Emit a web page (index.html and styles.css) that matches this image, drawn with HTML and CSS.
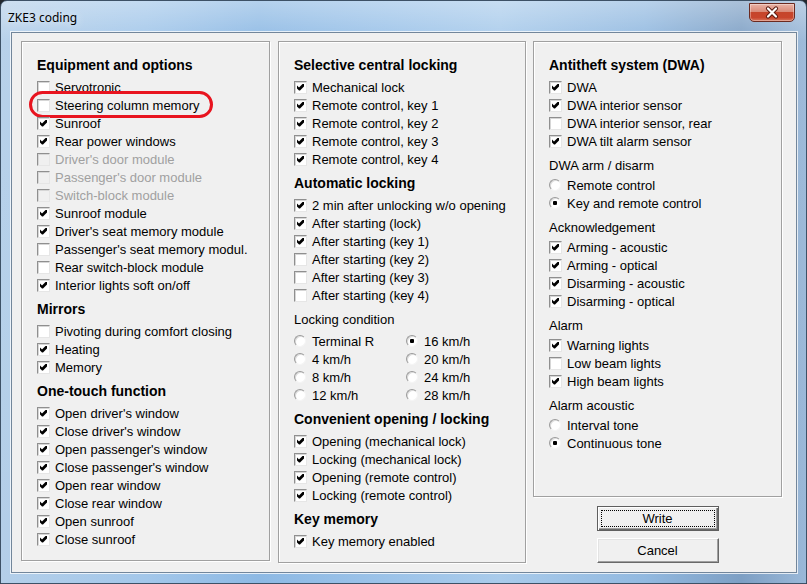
FILE: index.html
```html
<!DOCTYPE html>
<html>
<head>
<meta charset="utf-8">
<title>ZKE3 coding</title>
<link rel="stylesheet" href="styles.css">
</head>
<body>
<div class="window">
  <div class="titlebar">
    <span class="title">ZKE3 coding</span>
    <span class="close">
      <svg width="46" height="19" viewBox="0 0 46 19">
        <path d="M19 5.5 L27 13.5 M27 5.5 L19 13.5" stroke="#5a1a10" stroke-width="4.2" stroke-linecap="round"/>
        <path d="M19 5.5 L27 13.5 M27 5.5 L19 13.5" stroke="#ffffff" stroke-width="2.2" stroke-linecap="round"/>
      </svg>
    </span>
  </div>
  <div class="client">
    <div class="group g-left">
      <div class="head">Equipment and options</div>
      <div class="row"><span class="cb"></span><span class="lbl">Servotronic</span></div>
      <div class="row"><span class="cb"></span><span class="lbl">Steering column memory</span><span class="mark"></span></div>
      <div class="row"><span class="cb on"></span><span class="lbl">Sunroof</span></div>
      <div class="row"><span class="cb on"></span><span class="lbl">Rear power windows</span></div>
      <div class="row dis"><span class="cb"></span><span class="lbl">Driver's door module</span></div>
      <div class="row dis"><span class="cb"></span><span class="lbl">Passenger's door module</span></div>
      <div class="row dis"><span class="cb"></span><span class="lbl">Switch-block module</span></div>
      <div class="row"><span class="cb on"></span><span class="lbl">Sunroof module</span></div>
      <div class="row"><span class="cb on"></span><span class="lbl">Driver's seat memory module</span></div>
      <div class="row"><span class="cb"></span><span class="lbl">Passenger's seat memory modul.</span></div>
      <div class="row"><span class="cb"></span><span class="lbl">Rear switch-block module</span></div>
      <div class="row"><span class="cb on"></span><span class="lbl">Interior lights soft on/off</span></div>
      <div class="head">Mirrors</div>
      <div class="row"><span class="cb"></span><span class="lbl">Pivoting during comfort closing</span></div>
      <div class="row"><span class="cb on"></span><span class="lbl">Heating</span></div>
      <div class="row"><span class="cb on"></span><span class="lbl">Memory</span></div>
      <div class="head">One-touch function</div>
      <div class="row"><span class="cb on"></span><span class="lbl">Open driver's window</span></div>
      <div class="row"><span class="cb on"></span><span class="lbl">Close driver's window</span></div>
      <div class="row"><span class="cb on"></span><span class="lbl">Open passenger's window</span></div>
      <div class="row"><span class="cb on"></span><span class="lbl">Close passenger's window</span></div>
      <div class="row"><span class="cb on"></span><span class="lbl">Open rear window</span></div>
      <div class="row"><span class="cb on"></span><span class="lbl">Close rear window</span></div>
      <div class="row"><span class="cb on"></span><span class="lbl">Open sunroof</span></div>
      <div class="row"><span class="cb on"></span><span class="lbl">Close sunroof</span></div>
    </div>

    <div class="group g-mid">
      <div class="head">Selective central locking</div>
      <div class="row"><span class="cb on"></span><span class="lbl">Mechanical lock</span></div>
      <div class="row"><span class="cb on"></span><span class="lbl">Remote control, key 1</span></div>
      <div class="row"><span class="cb on"></span><span class="lbl">Remote control, key 2</span></div>
      <div class="row"><span class="cb on"></span><span class="lbl">Remote control, key 3</span></div>
      <div class="row"><span class="cb on"></span><span class="lbl">Remote control, key 4</span></div>
      <div class="head">Automatic locking</div>
      <div class="row"><span class="cb on"></span><span class="lbl">2 min after unlocking w/o opening</span></div>
      <div class="row"><span class="cb on"></span><span class="lbl">After starting (lock)</span></div>
      <div class="row"><span class="cb on"></span><span class="lbl">After starting (key 1)</span></div>
      <div class="row"><span class="cb"></span><span class="lbl">After starting (key 2)</span></div>
      <div class="row"><span class="cb"></span><span class="lbl">After starting (key 3)</span></div>
      <div class="row"><span class="cb"></span><span class="lbl">After starting (key 4)</span></div>
      <div class="sub">Locking condition</div>
      <div class="radios">
        <div class="row"><span class="rb"></span><span class="lbl">Terminal R</span></div>
        <div class="row"><span class="rb on"></span><span class="lbl">16 km/h</span></div>
        <div class="row"><span class="rb"></span><span class="lbl">4 km/h</span></div>
        <div class="row"><span class="rb"></span><span class="lbl">20 km/h</span></div>
        <div class="row"><span class="rb"></span><span class="lbl">8 km/h</span></div>
        <div class="row"><span class="rb"></span><span class="lbl">24 km/h</span></div>
        <div class="row"><span class="rb"></span><span class="lbl">12 km/h</span></div>
        <div class="row"><span class="rb"></span><span class="lbl">28 km/h</span></div>
      </div>
      <div class="head">Convenient opening / locking</div>
      <div class="row"><span class="cb on"></span><span class="lbl">Opening (mechanical lock)</span></div>
      <div class="row"><span class="cb on"></span><span class="lbl">Locking (mechanical lock)</span></div>
      <div class="row"><span class="cb on"></span><span class="lbl">Opening (remote control)</span></div>
      <div class="row"><span class="cb on"></span><span class="lbl">Locking (remote control)</span></div>
      <div class="head">Key memory</div>
      <div class="row"><span class="cb on"></span><span class="lbl">Key memory enabled</span></div>
    </div>

    <div class="side">
      <div class="group g-right">
        <div class="head">Antitheft system (DWA)</div>
        <div class="row"><span class="cb on"></span><span class="lbl">DWA</span></div>
        <div class="row"><span class="cb on"></span><span class="lbl">DWA interior sensor</span></div>
        <div class="row"><span class="cb"></span><span class="lbl">DWA interior sensor, rear</span></div>
        <div class="row"><span class="cb on"></span><span class="lbl">DWA tilt alarm sensor</span></div>
        <div class="sub tight">DWA arm / disarm</div>
        <div class="row"><span class="rb"></span><span class="lbl">Remote control</span></div>
        <div class="row"><span class="rb on"></span><span class="lbl">Key and remote control</span></div>
        <div class="sub tight">Acknowledgement</div>
        <div class="row"><span class="cb on"></span><span class="lbl">Arming - acoustic</span></div>
        <div class="row"><span class="cb on"></span><span class="lbl">Arming - optical</span></div>
        <div class="row"><span class="cb on"></span><span class="lbl">Disarming - acoustic</span></div>
        <div class="row"><span class="cb on"></span><span class="lbl">Disarming - optical</span></div>
        <div class="sub tight">Alarm</div>
        <div class="row"><span class="cb on"></span><span class="lbl">Warning lights</span></div>
        <div class="row"><span class="cb"></span><span class="lbl">Low beam lights</span></div>
        <div class="row"><span class="cb on"></span><span class="lbl">High beam lights</span></div>
        <div class="sub tight">Alarm acoustic</div>
        <div class="row"><span class="rb"></span><span class="lbl">Interval tone</span></div>
        <div class="row"><span class="rb on"></span><span class="lbl">Continuous tone</span></div>
      </div>
      <button class="btn default"><span class="focus">Write</span></button>
      <button class="btn cancel">Cancel</button>
    </div>
  </div>
</div>
</body>
</html>
```

FILE: styles.css
```css
html, body {
  margin: 0;
  padding: 0;
}
body {
  width: 807px;
  height: 584px;
  overflow: hidden;
  background: #23282e;
  font-family: "Liberation Sans", Arial, sans-serif;
}
.window {
  box-sizing: border-box;
  width: 807px;
  height: 584px;
  border: 1px solid #3d5166;
  border-radius: 7px 7px 0 0;
  background:
    linear-gradient(180deg, rgba(255,255,255,0.35) 0, rgba(255,255,255,0.05) 40px, rgba(255,255,255,0) 100%),
    linear-gradient(90deg, #b4cfe9 0%, #a3c7ea 18%, #8db9e4 32%, #9cc3e9 48%, #a9cbeb 62%, #92b9e0 80%, #7d9fc4 92%, #9ab8d8 100%);
  display: flex;
  flex-direction: column;
  padding: 0 9px 10px 10px;
}
.titlebar {
  height: 31px;
  flex: none;
  margin: 0 -9px 0 -10px;
  padding: 0 11px 0 7px;
  display: flex;
  align-items: flex-start;
}
.title {
  margin-top: 9px;
  font-family: "Noto Sans", "Open Sans", sans-serif;
  font-size: 12px;
  line-height: 16px;
  color: #000;
  text-shadow: 0 0 8px rgba(255,255,255,0.9);
}
.close {
  margin-left: auto;
  margin-top: 2px;
  width: 46px;
  height: 19px;
  box-sizing: border-box;
  border: 1px solid #6b2a20;
  border-radius: 0 0 5px 5px;
  background: linear-gradient(180deg, #eab3a6 0%, #d98a78 45%, #c5452b 50%, #c8452c 80%, #d8785f 100%);
  box-shadow: inset 0 0 0 1px rgba(255,255,255,0.35);
  position: relative;
}
.close svg {
  position: absolute;
  left: -1px;
  top: -1px;
}
.client {
  flex: 1;
  box-sizing: border-box;
  border: 1px solid #72869b;
  box-shadow: 0 0 0 1px rgba(255,255,255,0.75);
  background: #f0f0f0;
  padding: 8px 0 0 9px;
  display: flex;
  align-items: flex-start;
  font-size: 13px;
  color: #000;
}
.group {
  box-sizing: border-box;
  border: 1px solid #a0a0a0;
  box-shadow: inset 1px 1px 0 #ffffff, 1px 1px 0 #ffffff;
  padding: 8px 0 0 15px;
}
.g-left { width: 249px; height: 520px; margin-right: 8px; }
.g-mid { width: 248px; height: 522px; margin-right: 7px; }
.g-right { width: 249px; height: 456px; }
.side {
  display: flex;
  flex-direction: column;
  align-items: center;
  width: 249px;
}
.head {
  font-weight: bold;
  font-size: 14px;
  line-height: 18px;
  height: 18px;
  margin: 6px 0 4px;
  white-space: nowrap;
}
.sub {
  font-size: 13px;
  line-height: 18px;
  height: 18px;
  margin: 6px 0 4px;
  padding-top: 1px;
  box-sizing: border-box;
}
.sub.tight { margin-bottom: 2px; }
.row {
  height: 18px;
  display: flex;
  align-items: center;
  white-space: nowrap;
  position: relative;
}
.lbl {
  line-height: 18px;
  padding-top: 2px;
}
.cb {
  position: relative;
  flex: none;
  box-sizing: border-box;
  width: 13px;
  height: 13px;
  margin-right: 5px;
  background: #ffffff;
  border: 1px solid;
  border-color: #8f8f8f #e6e6e6 #e6e6e6 #8f8f8f;
  box-shadow: inset 1px 1px 0 #d6d6d6;
}
.cb.on::after {
  content: "";
  position: absolute;
  left: 2px;
  top: 2px;
  width: 7px;
  height: 7px;
  background: #000;
  clip-path: polygon(0 2px, 2px 4px, 6px 0, 7px 0, 7px 3px, 3px 7px, 2px 7px, 0 5px);
}
.dis { color: #a0a0a0; }
.dis .cb { background: #f0f0f0; }
.rb {
  position: relative;
  flex: none;
  box-sizing: border-box;
  width: 12px;
  height: 12px;
  margin-right: 6px;
  border-radius: 50%;
  border: 1px solid;
  border-color: #9a9a9a #f4f4f4 #f4f4f4 #9a9a9a;
  background: #ffffff;
  box-shadow: inset 1px 1px 0 #dcdcdc;
}
.rb.on::after {
  content: "";
  position: absolute;
  left: 3px;
  top: 3px;
  width: 4px;
  height: 4px;
  border-radius: 1px;
  background: #000;
}
.radios {
  display: grid;
  grid-template-columns: 112px auto;
}
.mark {
  position: absolute;
  left: -8px;
  top: -5px;
  width: 184px;
  height: 27px;
  box-sizing: border-box;
  border: 3px solid #e8141f;
  border-radius: 14px;
}
.btn {
  box-sizing: border-box;
  width: 122px;
  height: 25px;
  padding: 0;
  font-family: "Liberation Sans", Arial, sans-serif;
  font-size: 13px;
  color: #000;
  background: #f0f0f0;
  border: 1px solid;
  display: flex;
  align-items: center;
  justify-content: center;
}
.default {
  margin-top: 9px;
  border-color: #5f5f5f;
  box-shadow: inset 1px 1px 0 #ffffff, inset -1px -1px 0 #696969, inset -2px -2px 0 #a0a0a0;
  padding: 3px;
}
.focus {
  flex: 1;
  align-self: stretch;
  display: flex;
  align-items: center;
  justify-content: center;
  border: 1px dotted #000;
}
.cancel {
  margin-top: 7px;
  border-color: #ffffff #696969 #696969 #ffffff;
  box-shadow: inset -1px -1px 0 #a0a0a0, inset 1px 1px 0 #e3e3e3;
}
```
